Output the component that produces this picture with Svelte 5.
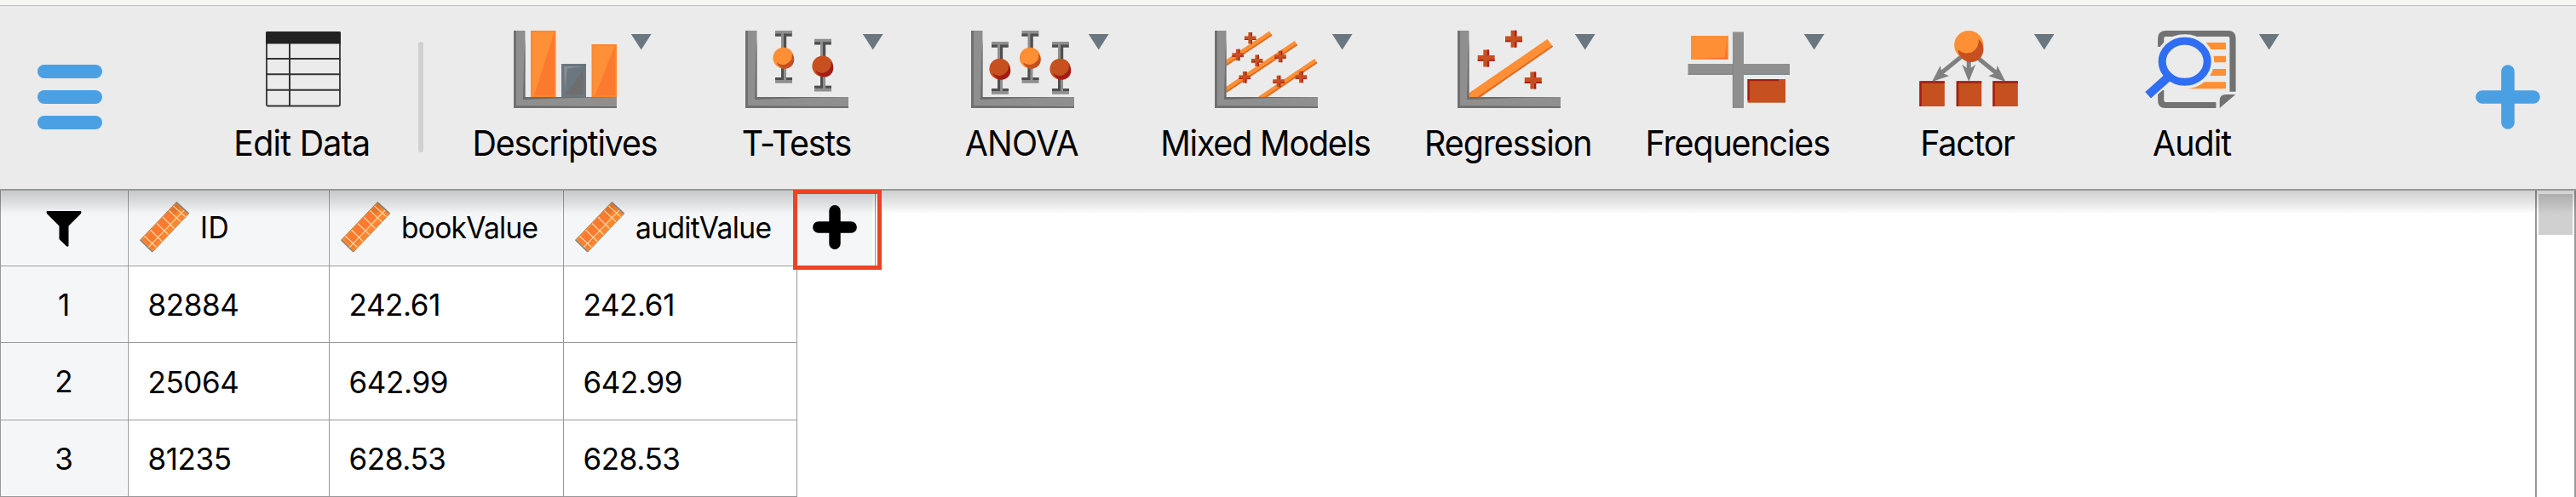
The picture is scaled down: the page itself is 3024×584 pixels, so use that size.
<script>
  const modules = [
    { name: 'Descriptives', width: 328, spacing: -1.25 },
    { name: 'T-Tests', width: 216, spacing: -1.28 },
    { name: 'ANOVA', width: 314, spacing: -0.85 },
    { name: 'Mixed Models', width: 258, spacing: -1.2 },
    { name: 'Regression', width: 312, spacing: -1.1 },
    { name: 'Frequencies', width: 226, spacing: -1.15 },
    { name: 'Factor', width: 314, spacing: -1.3 },
    { name: 'Audit', width: 214, spacing: -0.95 }
  ];
  const columns = [
    { name: 'ID', spacing: 0.4 },
    { name: 'bookValue', spacing: -0.8 },
    { name: 'auditValue', spacing: -0.7 }
  ];
  const rows = [
    ['82884', '242.61', '242.61'],
    ['25064', '642.99', '642.99'],
    ['81235', '628.53', '628.53']
  ];
</script>

{#snippet axis()}
  <path d="M0 0H13.5V78H121V91H0Z" fill="#8f8f8f" />
  <path d="M0 0H3V88L121 89V91H0Z" fill="#707070" />
  <path d="M13.5 10V78H121L60 79.2L11 81L12.3 30Z" fill="#6c6c6c" />
{/snippet}

{#snippet errorBar(x, y, dark)}
  <g transform="translate({x} {y})">
    <path d="M0 0H20V7H13V55H20V61.7H0V55H7V7H0Z" fill="#8f8f8f" />
    <path d="M0 3.5H7V6.5H0ZM10 3.5H19.5V6.5H13.2V24H10ZM7 40H10V58H0V55H7ZM13 55H20V58H13Z" fill="#4f4f4f" />
    <circle cx="9.7" cy="32" r="12.3" fill={dark ? '#c65020' : '#fe8f35'} />
    <path d="M19.6 27A10.6 10.6 0 1 1 1.6 37.2A11 11 0 0 0 19.6 27Z" fill={dark ? '#a51c14' : '#c65020'} />
    <circle cx="8.6" cy="30.6" r="9" fill={dark ? '#c65020' : '#fe8f35'} />
  </g>
{/snippet}

{#snippet cross(x, y, s)}
  <g transform="translate({x} {y}) scale({s})">
    <path d="M-3.4 -10H3.4V-3.4H10V3.4H3.4V10H-3.4V3.4H-10V-3.4H-3.4Z" fill="#c65020" />
    <path d="M1.2 -10H3.4V-3.4H1.2ZM3.4 1.6H10V3.4H3.4V10H1.2V3.4H3.4ZM-10 1.6H-3.4V3.4H-10Z" fill="#ab2016" />
  </g>
{/snippet}

{#snippet slope(x1, y1, x2, y2)}
  <line {x1} {y1} {x2} {y2} stroke="#fe8f35" stroke-width="6" />
  <line x1={x1 + 1.2} y1={y1 + 1.9} x2={x2 + 1.2} y2={y2 + 1.9} stroke="#e06a20" stroke-width="1.8" />
{/snippet}

{#snippet icon(name)}
  <svg class="icon" width="122" height="91" viewBox="0 0 122 91">
    {#if name === 'Edit Data'}
      <rect x="18" y="2" width="86" height="86.5" rx="1.5" fill="none" stroke="#333" stroke-width="1.8" />
      <path d="M18.5 1H103.5Q105 1 105 2.5V15.5H17V2.5Q17 1 18.5 1Z" fill="#212121" />
      <path d="M17 33H105M17 51.3H105M17 69.7H105M45 15V88" stroke="#333" stroke-width="2" fill="none" />
    {:else if name === 'Descriptives'}
      {@render axis()}
      <path d="M20 0H49.5V78H20Z" fill="#fd8730" />
      <path d="M22 2H47.5L23.5 77H22Z" fill="#fe9037" />
      <path d="M47.5 3V76H24Z" fill="#fc7a30" />
      <path d="M56 39H85V78H56Z" fill="#6b7780" />
      <path d="M82 46V75H60Z" fill="#6e6e6e" />
      <path d="M59 42H82L63 44.5L60 68Z" fill="#8a8f92" />
      <path d="M91.5 16H121V78H91.5Z" fill="#fd8730" />
      <path d="M93.5 18H118L95 76H93.5Z" fill="#fe9037" />
      <path d="M119 18V76H96Z" fill="#fc7a30" />
    {:else if name === 'T-Tests'}
      {@render axis()}
      {@render errorBar(35, 0, false)}
      {@render errorBar(81, 9.8, true)}
    {:else if name === 'ANOVA'}
      {@render axis()}
      {@render errorBar(24, 13, true)}
      {@render errorBar(59.5, 0, false)}
      {@render errorBar(95, 13, true)}
    {:else if name === 'Mixed Models'}
      {@render slope(12.5, 38.5, 65.8, 3)}
      {@render slope(12.5, 70, 95.5, 14.5)}
      {@render slope(53, 80, 118.8, 35.5)}
      {@render axis()}
      {@render cross(41.7, 8.8, 0.68)}
      {@render cross(27.2, 28.5, 0.68)}
      {@render cross(49.7, 35.2, 0.68)}
      {@render cross(77, 30.5, 0.68)}
      {@render cross(35.2, 54.8, 0.68)}
      {@render cross(75, 59.5, 0.68)}
      {@render cross(101.4, 54.5, 0.68)}
    {:else if name === 'Regression'}
      <path d="M12.4 74L105.4 10L112 18.5L27 78H12.4Z" fill="#fe8f35" />
      <path d="M111 17.5L112 19L27 78H23Z" fill="#e06a20" />
      {@render axis()}
      {@render cross(33.7, 32.4, 1)}
      {@render cross(66, 9.8, 1)}
      {@render cross(88.8, 58.5, 1)}
    {:else if name === 'Frequencies'}
      <path d="M54 1.5H67V39H121V52H67V91H54V52H1.6V39H54Z" fill="#8f8f8f" />
      <path d="M1.6 51.3H54M67 51.3H121M54.4 39V91" stroke="#7d8489" stroke-width="1" fill="none" />
      <rect x="5" y="6" width="44" height="28" fill="#fe8f35" />
      <path d="M47 10V33H14L45 31.4Z" fill="#fd6a2c" />
      <rect x="71.5" y="57" width="44.5" height="27.7" fill="#c65020" />
      <path d="M71.5 57H108V59.2H73.8V82H71.5Z" fill="#a51c14" />
    {:else if name === 'Factor'}
      <path d="M52.2 30.7L28 50.5M70.2 30.7L94.4 50.5M61.2 32V50" stroke="#808080" stroke-width="5" />
      <path d="M18 60L27.8 41L29.5 49.5L38 53.3ZM104.4 60L94.6 41L92.9 49.5L84.4 53.3ZM61.2 60L53.2 39.7L61.2 45.7L69.2 39.7Z" fill="#808080" />
      <circle cx="61.2" cy="17" r="17.1" fill="#fe8f35" />
      <path d="M72.5 10A15 15 0 1 1 48.5 22A14 14 0 0 0 72.5 10Z" fill="#c65020" />
      <circle cx="59.7" cy="13.6" r="12.5" fill="#fe8f35" />
      {#each [3.3, 46.7, 89.3] as x}
        <rect {x} y="59.3" width="29.5" height="29.7" fill="#c65020" />
        <path d="M{x} 59.3h29.5v2.4h-27v27.3h-2.5Z" fill="#a51c14" />
      {/each}
    {:else if name === 'Audit'}
      <path d="M22.7 19V9Q22.7 3.5 28.2 3.5H101.5Q107 3.5 107 9V71.7M22.7 70V82Q22.7 87.5 28.2 87.5H87.5" fill="none" stroke="#727272" stroke-width="7.2" />
      <path d="M91.7 91V82Q91.7 75 99 75H110.3Z" fill="#727272" />
      <path d="M76 14H99V22H76ZM84 29.7H99V37.3H84ZM76 45H99V53H76ZM54.5 68.3Q64 65 70 60.3H99V68.3Z" fill="#fe8f35" />
      <ellipse cx="50.7" cy="36.3" rx="28" ry="25.5" fill="none" stroke="#ebebeb" stroke-width="13" />
      <path d="M32 54.5L7.3 75.7" stroke="#ebebeb" stroke-width="14" />
      <ellipse cx="50.7" cy="36.3" rx="26.5" ry="24" fill="none" stroke="#2f6ef2" stroke-width="9" />
      <path d="M33 53L7.6 75.7" stroke="#2f6ef2" stroke-width="10" />
    {/if}
    {#if name !== 'Edit Data'}
      <path d="M137.8 4H161.6L149.7 22.4Z" fill="#6b7780" />
    {/if}
  </svg>
{/snippet}

{#snippet module(name, width, spacing)}
  <div class="module" style:width="{width}px">
    {@render icon(name)}
    <span class="label" style:letter-spacing="{spacing}px">{name}</span>
  </div>
{/snippet}

<div class="app">
  <div class="strip"></div>
  <header class="toolbar">
    <div class="menu"><i></i><i></i><i></i></div>
    <div class="edit">{@render module('Edit Data', 210, -0.8)}</div>
    <div class="separator"></div>
    {#each modules as m}
      {@render module(m.name, m.width, m.spacing)}
    {/each}
    <svg class="add" width="76" height="76" viewBox="0 0 76 76">
      <path d="M8 38H68M38 8V68" stroke="#4ba0e3" stroke-width="15.6" stroke-linecap="round" />
    </svg>
  </header>
  <main class="content">
    <div class="sheet">
      <div class="grid">
        <div class="cell head filter">
          <svg width="42" height="42" viewBox="0 0 42 42"><path d="M1 0H41Q42 2 40.5 3.5L26.5 17.5V41Q25.5 42.5 24 41.3L15.5 33V17.5L1.5 3.5Q0 2 1 0Z" fill="#000" /></svg>
        </div>
        {#each columns as c}
          <div class="cell head column">
            <svg class="ruler" width="58" height="60" viewBox="0 0 58 60">
              <path d="M43 .6L57.6 14L15 59L.6 45Z" fill="#fd8730" />
              <path d="M27 18L43 4L47 8L30 34L15 55L5 45Z" fill="#fc7a30" />
              <path d="M36 9L43 3L47 8L38 18Z" fill="#e97a2c" />
              <path d="M5 40L19.5 53.5M12.5 33L26.5 47M20 25.5L34 39M27 18L41 32M34.5 10.5L48.5 24M39.5 5L55 19M9 55L53 9" fill="none" stroke="#ffd9a8" stroke-width="1.1" />
              <path d="M43 .6L57.6 14M15 59L.6 45" stroke="#858585" stroke-width="1.6" />
              <path d="M.6 45L43 .6M15 59L57.6 14" stroke="#b98a5c" stroke-width="1" />
            </svg>
            <span class="name" style:letter-spacing="{c.spacing}px">{c.name}</span>
          </div>
        {/each}
        <div class="cell head plus">
          <svg width="52" height="52" viewBox="0 0 52 52"><path d="M6.8 26H45.2M26 6.8V45.2" stroke="#000" stroke-width="13.4" stroke-linecap="round" /></svg>
          <div class="highlight"></div>
        </div>
        {#each rows as row, i}
          <div class="cell head number">{i + 1}</div>
          {#each row as value}
            <div class="cell value">{value}</div>
          {/each}
          <div></div>
        {/each}
      </div>
    </div>
    <div class="scrollbar"><div class="thumb"></div></div>
    <div class="shade"></div>
  </main>
</div>

<style>
  :global(body) {
    overflow: hidden;
    background: #fff;
  }
  .app {
    width: 3024px;
    height: 584px;
    display: flex;
    flex-direction: column;
    overflow: hidden;
    font-family: Inter, 'Liberation Sans', sans-serif;
    color: #000;
  }
  .strip {
    height: 6px;
    background: #f5f5f1;
    border-bottom: 1px solid #bfc0c0;
  }
  .toolbar {
    height: 215px;
    border-bottom: 2px solid #999;
    background: #ebebeb;
    display: flex;
    padding: 0 42px 0 44px;
    flex: none;
  }
  .menu {
    width: 76px;
    margin-top: 69px;
    display: flex;
    flex-direction: column;
    gap: 14.4px;
  }
  .menu i {
    height: 15.7px;
    border-radius: 8px;
    background: #4ba0e3;
  }
  .edit {
    margin-left: 131px;
  }
  .separator {
    width: 6px;
    height: 130px;
    border-radius: 3px;
    background: #d0d0d0;
    margin: 42px 3px 0 30px;
  }
  .module {
    padding-top: 29px;
    display: flex;
    flex-direction: column;
    align-items: center;
    flex: none;
  }
  .icon {
    display: block;
    overflow: visible;
  }
  .label {
    margin: 16px 3px 0 0;
    font-size: 41px;
    line-height: 50px;
    white-space: nowrap;
    transform: scaleX(0.96);
  }
  .add {
    margin: 69px 0 0 auto;
  }
  .content {
    position: relative;
    flex: 1;
    display: flex;
    min-height: 0;
    background: #fff;
  }
  .sheet {
    flex: 1;
    display: flex;
    align-items: flex-start;
  }
  .grid {
    display: grid;
    flex: none;
    grid-template-columns: 150px 236px 275px 274px 92px;
    grid-template-rows: 89px 90px 91px 90px;
    border-left: 1px solid #98989a;
    font-size: 35px;
    line-height: 44px;
  }
  .cell {
    box-sizing: border-box;
    border-right: 1px solid #98989a;
    border-bottom: 1px solid #98989a;
    display: flex;
    align-items: center;
  }
  .head {
    background: #f4f6f8;
    box-shadow: inset -1px -1px #fff;
  }
  .filter,
  .number {
    justify-content: center;
    padding-right: 1px;
  }
  .filter svg {
    margin-top: 2px;
  }
  .column {
    padding-left: 13px;
    gap: 13px;
  }
  .ruler {
    margin-top: -2px;
    flex: none;
  }
  .name {
    margin-top: -3px;
    transform: scaleX(0.96);
    transform-origin: left;
  }
  .value {
    padding: 1px 0 0 22.5px;
    letter-spacing: -0.4px;
  }
  .plus {
    position: relative;
    padding: 0 0 3px 18px;
    border-bottom: 0;
    box-shadow: inset -3px 0 #fff;
  }
  .highlight {
    position: absolute;
    left: -5.5px;
    top: -1px;
    width: 94px;
    height: 83.5px;
    border: 5px solid #ec4226;
    z-index: 2;
  }
  .scrollbar {
    box-sizing: border-box;
    width: 48px;
    border-left: 2px solid #999;
    border-right: 2px solid #999;
    padding: 4px 2px;
  }
  .thumb {
    height: 48px;
    background: #d0d0d0;
  }
  .shade {
    position: absolute;
    left: 0;
    right: 0;
    top: 0;
    height: 28px;
    background: linear-gradient(rgba(0, 0, 0, 0.19), rgba(0, 0, 0, 0.09) 55%, rgba(0, 0, 0, 0));
  }
</style>
